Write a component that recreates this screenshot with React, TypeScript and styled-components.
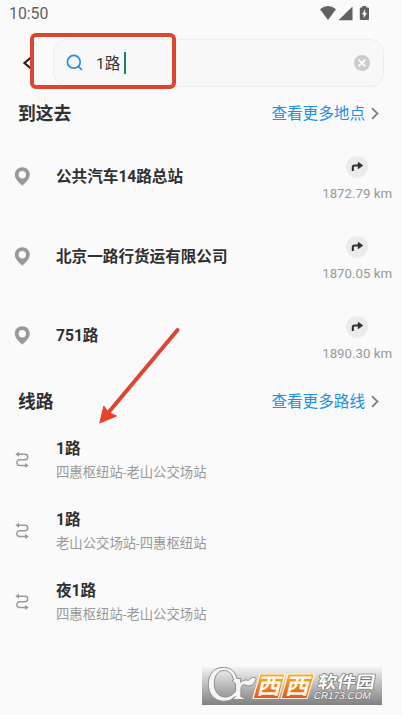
import React from 'react';
import styled, { createGlobalStyle } from 'styled-components';

const GlobalStyle = createGlobalStyle`
  * { box-sizing: border-box; }
  body { margin: 0; background: #fafafa; }
`;

const Screen = styled.main`
  position: relative;
  width: 402px;
  height: 715px;
  overflow: hidden;
  background: #fafafa;
  color: #303030;
  font-family: Roboto, 'Noto Sans CJK SC', sans-serif;
`;

const StatusBar = styled.header`
  display: flex;
  justify-content: space-between;
  align-items: center;
  height: 28px;
  padding: 0 32px 0 9px;
  color: #616161;
  font-size: 15.8px;
  line-height: 28px;
`;

const SearchRow = styled.div`
  display: flex;
  align-items: center;
  height: 48px;
  margin-top: 11px;
  padding: 0 18px 0 22px;
`;

const BackIcon = styled.svg`
  width: 12px;
  height: 16px;
  margin-right: 19px;
`;

const SearchField = styled.div`
  display: flex;
  align-items: center;
  flex: 1;
  height: 48px;
  padding: 0 13px 0 12px;
  background: #f8f8f8;
  border: 1px solid #eeeeee;
  border-radius: 14px;
`;

const Query = styled.span`
  margin-left: 12px;
  padding-top: 1px;
  font-size: 15.5px;
  line-height: 24px;
  color: #333;
`;

const Caret = styled.span`
  width: 2px;
  height: 22px;
  margin-left: 4px;
  background: #16836f;
`;

const ClearIcon = styled.svg`
  margin-left: auto;
`;

const SectionHeader = styled.div<{ $height: number; $top: number }>`
  display: flex;
  justify-content: space-between;
  align-items: center;
  height: ${p => p.$height}px;
  padding: ${p => p.$top}px 23px 0 18px;
`;

const SectionTitle = styled.h2`
  margin: 0;
  font-size: 17.8px;
  font-weight: 700;
  line-height: 26px;
`;

const MoreLink = styled.a`
  display: flex;
  align-items: center;
  gap: 6px;
  color: #1c8fec;
  font-size: 15.6px;
  line-height: 24px;
`;

const PlaceRow = styled.div`
  display: flex;
  align-items: center;
  height: 79.7px;
  padding: 0 10px 0 14px;
`;

const RowIcon = styled.svg`
  flex: none;
  width: 16px;
  height: 20px;
  margin-right: 26px;
`;

const Name = styled.div`
  font-size: 15.6px;
  font-weight: 700;
  line-height: 24px;
`;

const Distance = styled.div`
  display: flex;
  flex-direction: column;
  align-items: center;
  gap: 7px;
  margin-left: auto;
  padding-top: 6px;
  color: #999;
  font-size: 13.25px;
  line-height: 18px;
`;

const RouteRow = styled.div`
  display: flex;
  align-items: center;
  height: 70.8px;
  padding-left: 14px;
`;

const Stops = styled.div`
  margin-top: 2px;
  color: #999;
  font-size: 13.35px;
  line-height: 20px;
`;

const Annotation = styled.svg`
  position: absolute;
  inset: 0;
  pointer-events: none;
`;

const Watermark = styled.svg`
  position: absolute;
  left: 202px;
  top: 665px;
`;

const places = [
  { name: '公共汽车14路总站', distance: '1872.79 km' },
  { name: '北京一路行货运有限公司', distance: '1870.05 km' },
  { name: '751路', distance: '1890.30 km' },
];

const routes = [
  { name: '1路', stops: '四惠枢纽站-老山公交场站' },
  { name: '1路', stops: '老山公交场站-四惠枢纽站' },
  { name: '夜1路', stops: '四惠枢纽站-老山公交场站' },
];

const StatusIcons = () => (
  <svg width="50" height="16" viewBox="0 0 50 16" fill="#616161">
    <path d="M0 3.3Q8-3.2 16 3.3L8 14Z" />
    <path d="M32.5 .5V14.3H18.5Z" />
    <path fillRule="evenodd" d="M42.3 0h4v1.6h1.7q1 0 1 1V13q0 1-1 1h-7.2q-1 0-1-1V2.6q0-1 1-1h1.5ZM45.2 3.3L41.9 8.4h1.9v3.7L47 7h-1.8Z" />
  </svg>
);

const Chevron = () => (
  <svg width="8" height="13" viewBox="0 0 8 13" fill="none" stroke="#808080" strokeWidth="1.8">
    <path d="M1 1.2L6.5 6.5L1 11.8" />
  </svg>
);

const Pin = () => (
  <RowIcon viewBox="0 0 16 20">
    <path fill="#999" fillRule="evenodd" d="M8.3 .3C4.1.3.8 3.5.8 7.5c0 4.8 4.7 8.4 7.5 11.2 2.8-2.8 7.5-6.4 7.5-11.2C15.8 3.5 12.5.3 8.3.3Zm0 3.7a3.7 3.7 0 1 1 0 7.4 3.7 3.7 0 0 1 0-7.4Z" />
  </RowIcon>
);

const TurnIcon = () => (
  <svg width="22" height="22" viewBox="0 0 22 22">
    <circle cx="11" cy="11" r="11" fill="#ebebeb" />
    <path d="M6.8 15V11.2Q6.8 9.5 8.6 9.5H13" fill="none" stroke="#303030" strokeWidth="2.1" />
    <path d="M12 6L17 9.5L12 13Z" fill="#303030" stroke="#303030" strokeWidth=".4" />
  </svg>
);

const RouteIcon = () => (
  <RowIcon viewBox="0 0 16 20">
    <path d="M4 4.2H11A2.75 2.75 0 0 1 11 9.7H5.7A2.9 2.9 0 0 0 5.7 15.5H12" fill="none" stroke="#999" strokeWidth="1.4" />
    <path d="M1.3 4.2L5 1.7V6.7ZM14.8 15.5L11.1 13V18Z" fill="#999" />
  </RowIcon>
);

const SiteMark = () => (
  <Watermark width="180" height="40" viewBox="0 0 180 40">
    <defs>
      <linearGradient id="plate" x2="0" y2="1">
        <stop stopColor="#f4f4f4" />
        <stop offset=".5" stopColor="#b9b9b9" />
        <stop offset="1" stopColor="#808080" />
      </linearGradient>
      <linearGradient id="tile" x2="0" y2="1">
        <stop stopColor="#f5b323" />
        <stop offset="1" stopColor="#e35324" />
      </linearGradient>
    </defs>
    <path d="M0 2H180V40H0Z" fill="url(#plate)" />
    <g strokeLinejoin="round" fill="#f5f5f5" stroke="#858585" strokeWidth=".9">
      <path d="M6.3 19.2C6.3 8.5 12.6 2.4 21.3 2.4C29 2.4 33.6 7 34.8 13.5H38.7V17.4C41.1 14.9 43.5 14.6 46.5 15.4C49.7 11.6 53.3 11.7 54.1 14.1C51.4 20.9 47.4 21.9 43.6 20.1C40.5 18.9 38.9 20.8 38.9 25V31.7L42.8 33.2V34.5H30.8V33.2L33.6 31.6C30.8 34.5 26.7 36.3 21.8 36.2C12.6 36 6.3 29.6 6.3 19.2ZM12.3 18.6C12.3 26.8 16.7 32 23.2 32C27.7 32 31.2 29.6 33.6 26V18.5L30.5 16.5V15H31.7C30.2 9 26.9 5.5 22.2 5.5C15.8 5.5 12.3 10.6 12.3 18.6Z" fillRule="evenodd" />
    </g>
    <g fill="url(#tile)" stroke="#fff2df" strokeWidth="1.2" strokeLinejoin="round">
      <path d="M58 9H83L76.5 33.5H51Z" />
      <path d="M86 9H112.5L105 33.5H79Z" />
    </g>
    <g fontFamily="'Noto Sans CJK SC', sans-serif" fontWeight="700" fill="#fff7eb" fontSize="22">
      <text transform="translate(54.2 29) skewX(-14) scale(1.08 1)">西</text>
      <text transform="translate(82.8 29) skewX(-14) scale(1.08 1)">西</text>
    </g>
    <g fill="#fff" stroke="#777" strokeWidth="1.4" paintOrder="stroke" strokeLinejoin="round">
      <text transform="translate(115 22.5) skewX(-10) scale(1.13 1)" fontFamily="'Noto Sans CJK SC', sans-serif" fontSize="16.8" fontWeight="700">软件园</text>
      <text transform="translate(111.2 33.8) skewX(-10)" fontFamily="'Liberation Sans', sans-serif" fontSize="10" textLength="57" lengthAdjust="spacingAndGlyphs">CR173.COM</text>
    </g>
  </Watermark>
);

export default function App() {
  return (
    <>
      <GlobalStyle />
      <Screen>
        <StatusBar><span>10:50</span><StatusIcons /></StatusBar>
        <SearchRow>
          <BackIcon viewBox="0 0 12 16"><path d="M10 1.5L2.5 8L10 14.5" fill="none" stroke="#222" strokeWidth="2.2" /></BackIcon>
          <SearchField>
            <svg width="18" height="18" viewBox="0 0 18 18" fill="none" stroke="#258de2" strokeWidth="1.7">
              <circle cx="7.8" cy="7.8" r="6.4" /><path d="M12.3 12.3L16 16" />
            </svg>
            <Query>1路</Query><Caret />
            <ClearIcon width="16" height="16" viewBox="0 0 16 16">
              <circle cx="8" cy="8" r="8" fill="#ccc" /><path d="M4.6 4.6L11.4 11.4M11.4 4.6L4.6 11.4" stroke="#fff" strokeWidth="1.6" />
            </ClearIcon>
          </SearchField>
        </SearchRow>
        <SectionHeader $height={50} $top={3}><SectionTitle>到这去</SectionTitle><MoreLink>查看更多地点<Chevron /></MoreLink></SectionHeader>
        {places.map(place => (
          <PlaceRow key={place.name}><Pin /><Name>{place.name}</Name><Distance><TurnIcon />{place.distance}</Distance></PlaceRow>
        ))}
        <SectionHeader $height={49} $top={2}><SectionTitle>线路</SectionTitle><MoreLink>查看更多路线<Chevron /></MoreLink></SectionHeader>
        {routes.map((route, index) => (
          <RouteRow key={index}><RouteIcon /><div><Name>{route.name}</Name><Stops>{route.stops}</Stops></div></RouteRow>
        ))}
        <Annotation width="402" height="715" viewBox="0 0 402 715">
          <rect x="32" y="35" width="142" height="52" rx="4" fill="none" stroke="#dc452f" strokeWidth="4" />
          <path d="M177.5 330L108 413" stroke="#dc452f" strokeWidth="4" strokeLinecap="round" />
          <path d="M99.8 423L103.8 406L108 412L116.5 416Z" fill="#e84229" stroke="#e84229" />
        </Annotation>
        <SiteMark />
      </Screen>
    </>
  );
}
